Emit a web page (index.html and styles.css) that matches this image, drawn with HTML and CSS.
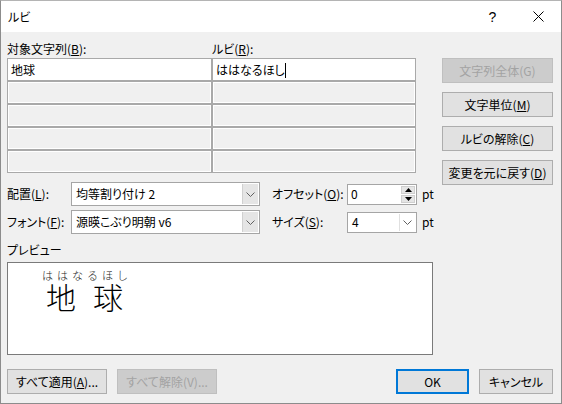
FILE: index.html
```html
<!DOCTYPE html>
<html lang="ja">
<head>
<meta charset="utf-8">
<title>ルビ</title>
<link rel="stylesheet" href="styles.css">
</head>
<body>
<div class="window">
  <div class="titlebar">
    <span class="title">ルビ</span>
    <div class="caption">
      <span class="cap help">?</span>
      <span class="cap close"><svg width="11" height="11" viewBox="0 0 11 11"><path d="M0.5 0.5 L10.5 10.5 M10.5 0.5 L0.5 10.5" stroke="#000" stroke-width="1" fill="none"/></svg></span>
    </div>
  </div>
  <div class="client">
    <div class="top">
      <div class="ruby-area">
        <div class="labels">
          <span class="lbl-base">対象文字列(<u>B</u>):</span>
          <span class="lbl-ruby">ルビ(<u>R</u>):</span>
        </div>
        <div class="grid">
          <div class="cell active">地球</div>
          <div class="cell active">ははなるほし<span class="caret"></span></div>
          <div class="cell"></div><div class="cell"></div>
          <div class="cell"></div><div class="cell"></div>
          <div class="cell"></div><div class="cell"></div>
          <div class="cell"></div><div class="cell"></div>
        </div>
      </div>
      <div class="side">
        <div class="btn disabled">文字列全体(G)</div>
        <div class="btn">文字単位(<u>M</u>)</div>
        <div class="btn">ルビの解除(<u>C</u>)</div>
        <div class="btn">変更を元に戻す(<u>D</u>)</div>
      </div>
    </div>

    <div class="options">
      <span class="lbl">配置(<u>L</u>):</span>
      <div class="combo wide"><span class="val">均等割り付け 2</span><span class="drop"><svg width="9" height="5" viewBox="0 0 9 5"><path d="M0.5 0.5 L4.5 4.5 L8.5 0.5" stroke="#606060" fill="none"/></svg></span></div>
      <span class="lbl lbl2">オフセット(<u>O</u>):</span>
      <div class="spin"><span class="val">0</span><span class="spinbtns"><span class="sb"><svg width="7" height="4" viewBox="0 0 7 4"><path d="M0 4 L3.5 0 L7 4 Z" fill="#000"/></svg></span><span class="sb"><svg width="7" height="4" viewBox="0 0 7 4"><path d="M0 0 L3.5 4 L7 0 Z" fill="#000"/></svg></span></span></div>
      <span class="unit">pt</span>

      <span class="lbl">フォント(<u>F</u>):</span>
      <div class="combo wide"><span class="val">源暎こぶり明朝 v6</span><span class="drop"><svg width="9" height="5" viewBox="0 0 9 5"><path d="M0.5 0.5 L4.5 4.5 L8.5 0.5" stroke="#606060" fill="none"/></svg></span></div>
      <span class="lbl lbl2">サイズ(<u>S</u>):</span>
      <div class="combo small"><span class="val">4</span><span class="drop"><svg width="9" height="5" viewBox="0 0 9 5"><path d="M0.5 0.5 L4.5 4.5 L8.5 0.5" stroke="#606060" fill="none"/></svg></span></div>
      <span class="unit">pt</span>
    </div>

    <div class="preview-label">プレビュー</div>
    <div class="preview">
      <div class="pv">
        <div class="pv-ruby">ははなるほし</div>
        <div class="pv-base">地球</div>
      </div>
    </div>

    <div class="footer">
      <div class="group">
        <div class="btn fb">すべて適用(<u>A</u>)...</div>
        <div class="btn fb disabled">すべて解除(V)...</div>
      </div>
      <div class="group">
        <div class="btn ok">OK</div>
        <div class="btn cancel">キャンセル</div>
      </div>
    </div>
  </div>
</div>
</body>
</html>
```

FILE: styles.css
```css
* { box-sizing: border-box; }
html, body { margin: 0; padding: 0; background: #f0f0f0; }
body {
  font-family: "Noto Sans CJK JP", "Noto Sans", sans-serif;
  font-size: 12px;
  line-height: 16px;
  color: #000;
  font-feature-settings: "palt";
}
u { text-decoration: underline; text-underline-offset: 1px; }

.window {
  width: 562px;
  height: 404px;
  border: 1px solid #8c8c8c;
  border-top-color: #b4b4b4;
  background: #f0f0f0;
  display: flex;
  flex-direction: column;
  overflow: hidden;
}

.titlebar {
  height: 31px;
  flex: none;
  background: #fff;
  display: flex;
  align-items: center;
  justify-content: space-between;
  padding-left: 7px;
}
.title { font-size: 12px; line-height: 31px; }
.caption { display: flex; height: 31px; }
.cap {
  width: 45px;
  display: flex;
  align-items: center;
  justify-content: center;
}
.help { font-size: 14px; font-family: "Liberation Sans", sans-serif; }
.close { width: 46px; }

.client {
  padding: 8px 7px 0 6px;
  display: flex;
  flex-direction: column;
}

.top { display: flex; justify-content: space-between; align-items: flex-start; }
.ruby-area { width: 409px; }
.labels { display: flex; height: 18px; line-height: 18px; }
.lbl-base { width: 205px; }

.grid {
  display: grid;
  grid-template-columns: 203px 1fr;
  grid-auto-rows: 21px;
  gap: 2px;
  background: #a9a9a9;
  border: 1px solid #a9a9a9;
}
.cell {
  background: #f0f0f0;
  border: 1px solid #fff;
  line-height: 19px;
  padding-left: 2px;
  white-space: nowrap;
}
.cell.active { background: #fff; }
.caret {
  display: inline-block;
  width: 1px;
  height: 15px;
  background: #000;
  vertical-align: -3px;
}

.side {
  width: 111px;
  margin-right: 1px;
  margin-bottom: -12px;
  padding-top: 18px;
  display: flex;
  flex-direction: column;
  gap: 9px;
}
.btn {
  height: 25px;
  background: #e1e1e1;
  border: 1px solid #adadad;
  display: flex;
  align-items: center;
  justify-content: center;
  white-space: nowrap;
}
.btn.disabled {
  background: #cccccc;
  border-color: #bfbfbf;
  color: #a3a3a3;
}

.options {
  margin-top: 9px;
  display: grid;
  grid-template-columns: 64px 189px 87px 70px auto;
  grid-template-rows: 24px 24px;
  row-gap: 4px;
  align-items: center;
}
.lbl { white-space: nowrap; }
.lbl2 { padding-left: 12px; }
.unit { padding-left: 5px; }

.combo {
  height: 24px;
  background: #fff;
  border: 1px solid #a5a5a5;
  display: flex;
  align-items: center;
}
.combo.small { height: 21px; }
.combo .val { flex: 1; padding-left: 4px; white-space: nowrap; }
.combo .drop {
  width: 16px;
  align-self: stretch;
  margin: 1px;
  background: #e5e5e5;
  border-left: 1px solid #d0d0d0;
  display: flex;
  align-items: center;
  justify-content: center;
}
.combo.small .drop { background: #fff; border-left-color: #e0e0e0; }

.spin {
  height: 21px;
  background: #fff;
  border: 1px solid #a5a5a5;
  display: flex;
  align-items: center;
}
.spin .val { flex: 1; padding-left: 3px; }
.spinbtns {
  width: 16px;
  align-self: stretch;
  display: flex;
  flex-direction: column;
  gap: 1px;
  padding: 1px;
}
.sb {
  flex: 1;
  background: #e5e5e5;
  border: 1px solid #cfcfcf;
  display: flex;
  align-items: center;
  justify-content: center;
}

.preview-label { margin-top: 7px; height: 18px; line-height: 18px; }
.preview {
  margin-top: 3px;
  width: 426px;
  height: 93px;
  flex: none;
  background: #fff;
  border: 1px solid #7a7a7a;
  padding: 6px 0 0 38px;
}
.pv-ruby {
  font-size: 11px;
  line-height: 12px;
  letter-spacing: 4px;
  font-weight: 300;
  color: #222;
  margin-left: -4px;
  font-feature-settings: normal;
}
.pv-base {
  font-size: 30px;
  line-height: 30px;
  letter-spacing: 17px;
  font-weight: 300;
  font-feature-settings: normal;
}

.footer {
  margin-top: 14px;
  display: flex;
  justify-content: space-between;
  padding-right: 1px;
}
.group { display: flex; gap: 10px; }
.fb { width: 100px; }
.ok { width: 73px; border: 2px solid #0078d7; }
.cancel { width: 74px; }
```
